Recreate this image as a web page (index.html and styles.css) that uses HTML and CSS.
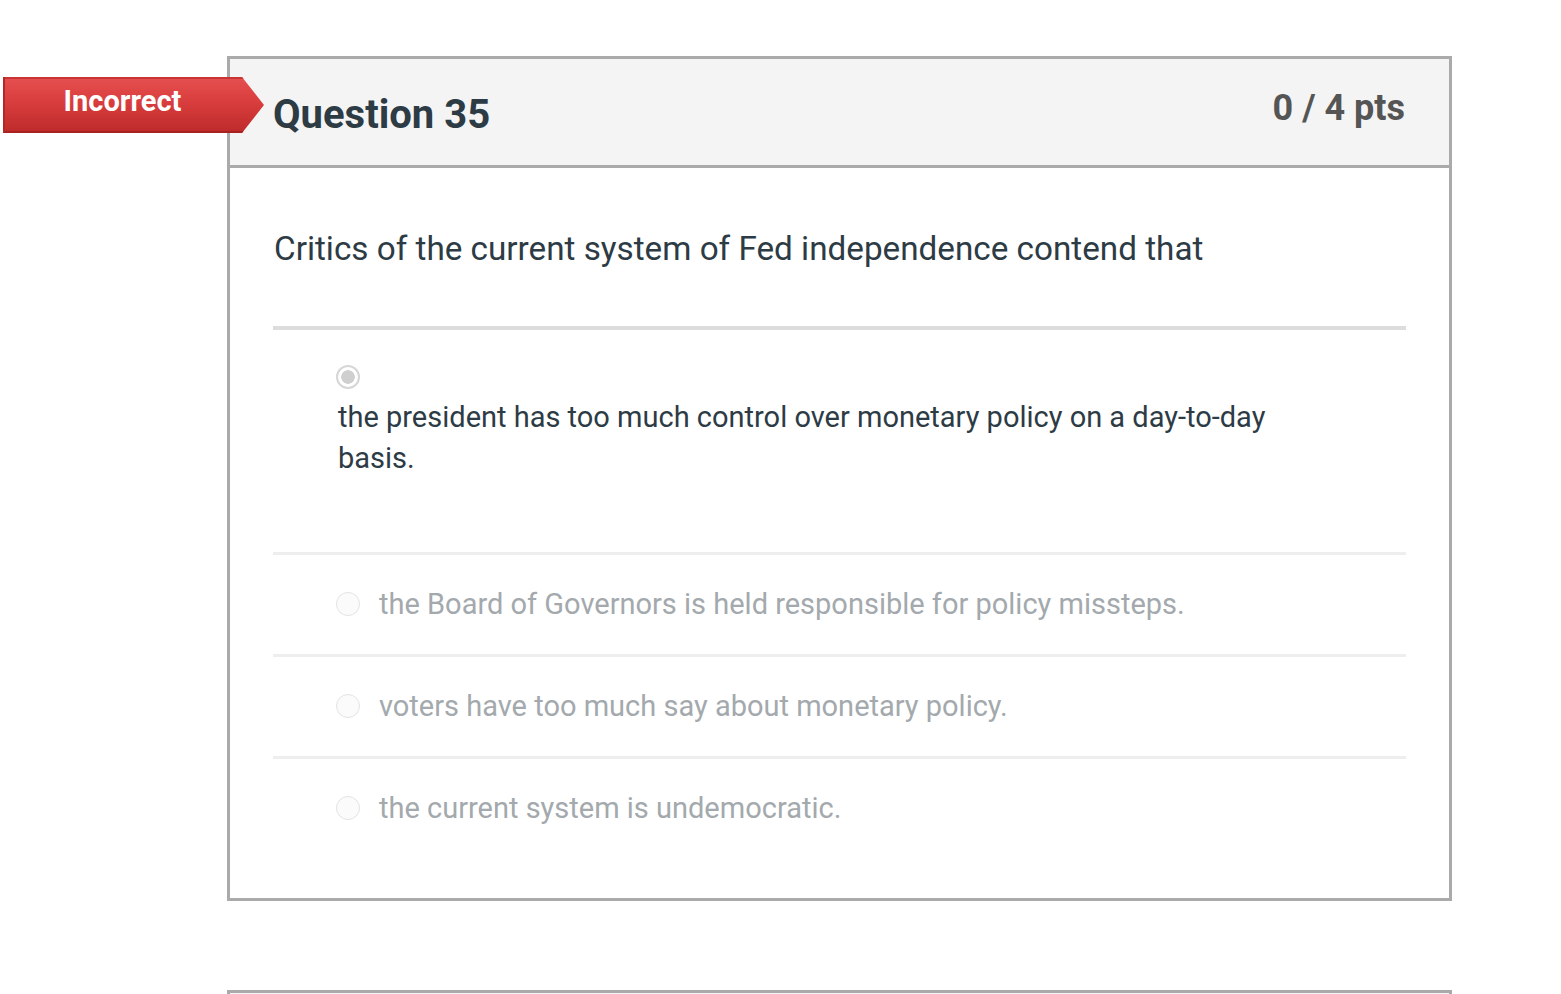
FILE: index.html
```html
<!DOCTYPE html>
<html lang="en">
<head>
<meta charset="utf-8">
<title>Question 35</title>
<link rel="stylesheet" href="styles.css">
</head>
<body>
<div class="page">
  <div class="question">
    <div class="flag"><span class="flag-text">Incorrect</span></div>
    <div class="q-header">
      <h2 class="q-title">Question 35</h2>
      <span class="pts">0 / 4 pts</span>
    </div>
    <div class="q-body">
      <div class="q-text">Critics of the current system of Fed independence contend that</div>
      <div class="answers">
        <div class="answer selected">
          <span class="radio checked"></span>
          <div class="answer-text">the president has too much control over monetary policy on a day-to-day basis.</div>
        </div>
        <div class="answer">
          <span class="radio"></span>
          <div class="answer-text">the Board of Governors is held responsible for policy missteps.</div>
        </div>
        <div class="answer">
          <span class="radio"></span>
          <div class="answer-text">voters have too much say about monetary policy.</div>
        </div>
        <div class="answer">
          <span class="radio"></span>
          <div class="answer-text">the current system is undemocratic.</div>
        </div>
      </div>
    </div>
  </div>
  <div class="question next">
    <div class="q-header"></div>
  </div>
</div>
</body>
</html>
```

FILE: styles.css
```css
html, body {
  margin: 0;
  padding: 0;
  background: #ffffff;
}

body {
  font-family: Roboto, "Liberation Sans", Arial, sans-serif;
  color: #2d3b45;
  overflow: hidden;
}

.page {
  padding: 56px 0 0 227px;
  width: 1225px;
}

.question {
  position: relative;
  border: 3px solid #aaaaaa;
  background: #ffffff;
}

.question.next {
  margin-top: 89px;
  height: 200px;
}

.flag {
  position: absolute;
  left: -227px;
  top: 18px;
  width: 261px;
  height: 56px;
  background: linear-gradient(to bottom, #e65050 0%, #d93d3d 45%, #bd2a2a 100%);
  clip-path: polygon(0 0, 239px 0, 261px 50%, 239px 100%, 0 100%);
  display: flex;
  align-items: center;
  box-shadow: inset 2px 0 0 #b32727, inset 0 2px 0 #c93434, inset 0 -2px 0 #a82222;
}

.flag-text {
  width: 239px;
  text-align: center;
  color: #ffffff;
  font-weight: 700;
  font-size: 29px;
  line-height: 1;
  margin-top: -8px;
  padding-left: 0;
  padding-right: 2px;
}

.q-header {
  display: flex;
  justify-content: space-between;
  align-items: flex-start;
  height: 109px;
  box-sizing: border-box;
  padding: 0 44px 0 43px;
  background: #f4f4f4;
  border-bottom: 3px solid #aaaaaa;
}

.q-title {
  margin: 0;
  padding-top: 36px;
  font-size: 40px;
  line-height: 40px;
  font-weight: 700;
  color: #2d3b45;
}

.pts {
  padding-top: 29px;
  font-size: 36px;
  line-height: 40px;
  font-weight: 700;
  color: #555555;
}

.q-body {
  padding: 0 43px 40px 43px;
}

.q-text {
  padding: 59px 0 55px 1px;
  font-size: 33.25px;
  line-height: 44px;
  border-bottom: 4px solid #dddddd;
}

.answer {
  display: flex;
  align-items: center;
  gap: 19px;
  padding: 29px 0 30px 63px;
  font-size: 29px;
  line-height: 40px;
  color: #a3a9ad;
  border-bottom: 3px solid #eeeeee;
}

.answer:last-child {
  border-bottom: none;
}

.answer.selected {
  display: block;
  padding: 35px 0 73px 63px;
  color: #2d3b45;
  line-height: 41px;
}

.answer.selected .answer-text {
  margin-top: 8px;
  padding-left: 2px;
  max-width: 960px;
}

.radio {
  display: block;
  flex: none;
  width: 24px;
  height: 24px;
  box-sizing: border-box;
  border-radius: 50%;
  border: 1.5px solid #e3e3e3;
  background: #fbfbfb;
}

.radio.checked {
  border: 2px solid #d6d6d6;
  background: radial-gradient(circle, #cfcfcf 0 6.5px, #ffffff 7px 100%);
}
```
